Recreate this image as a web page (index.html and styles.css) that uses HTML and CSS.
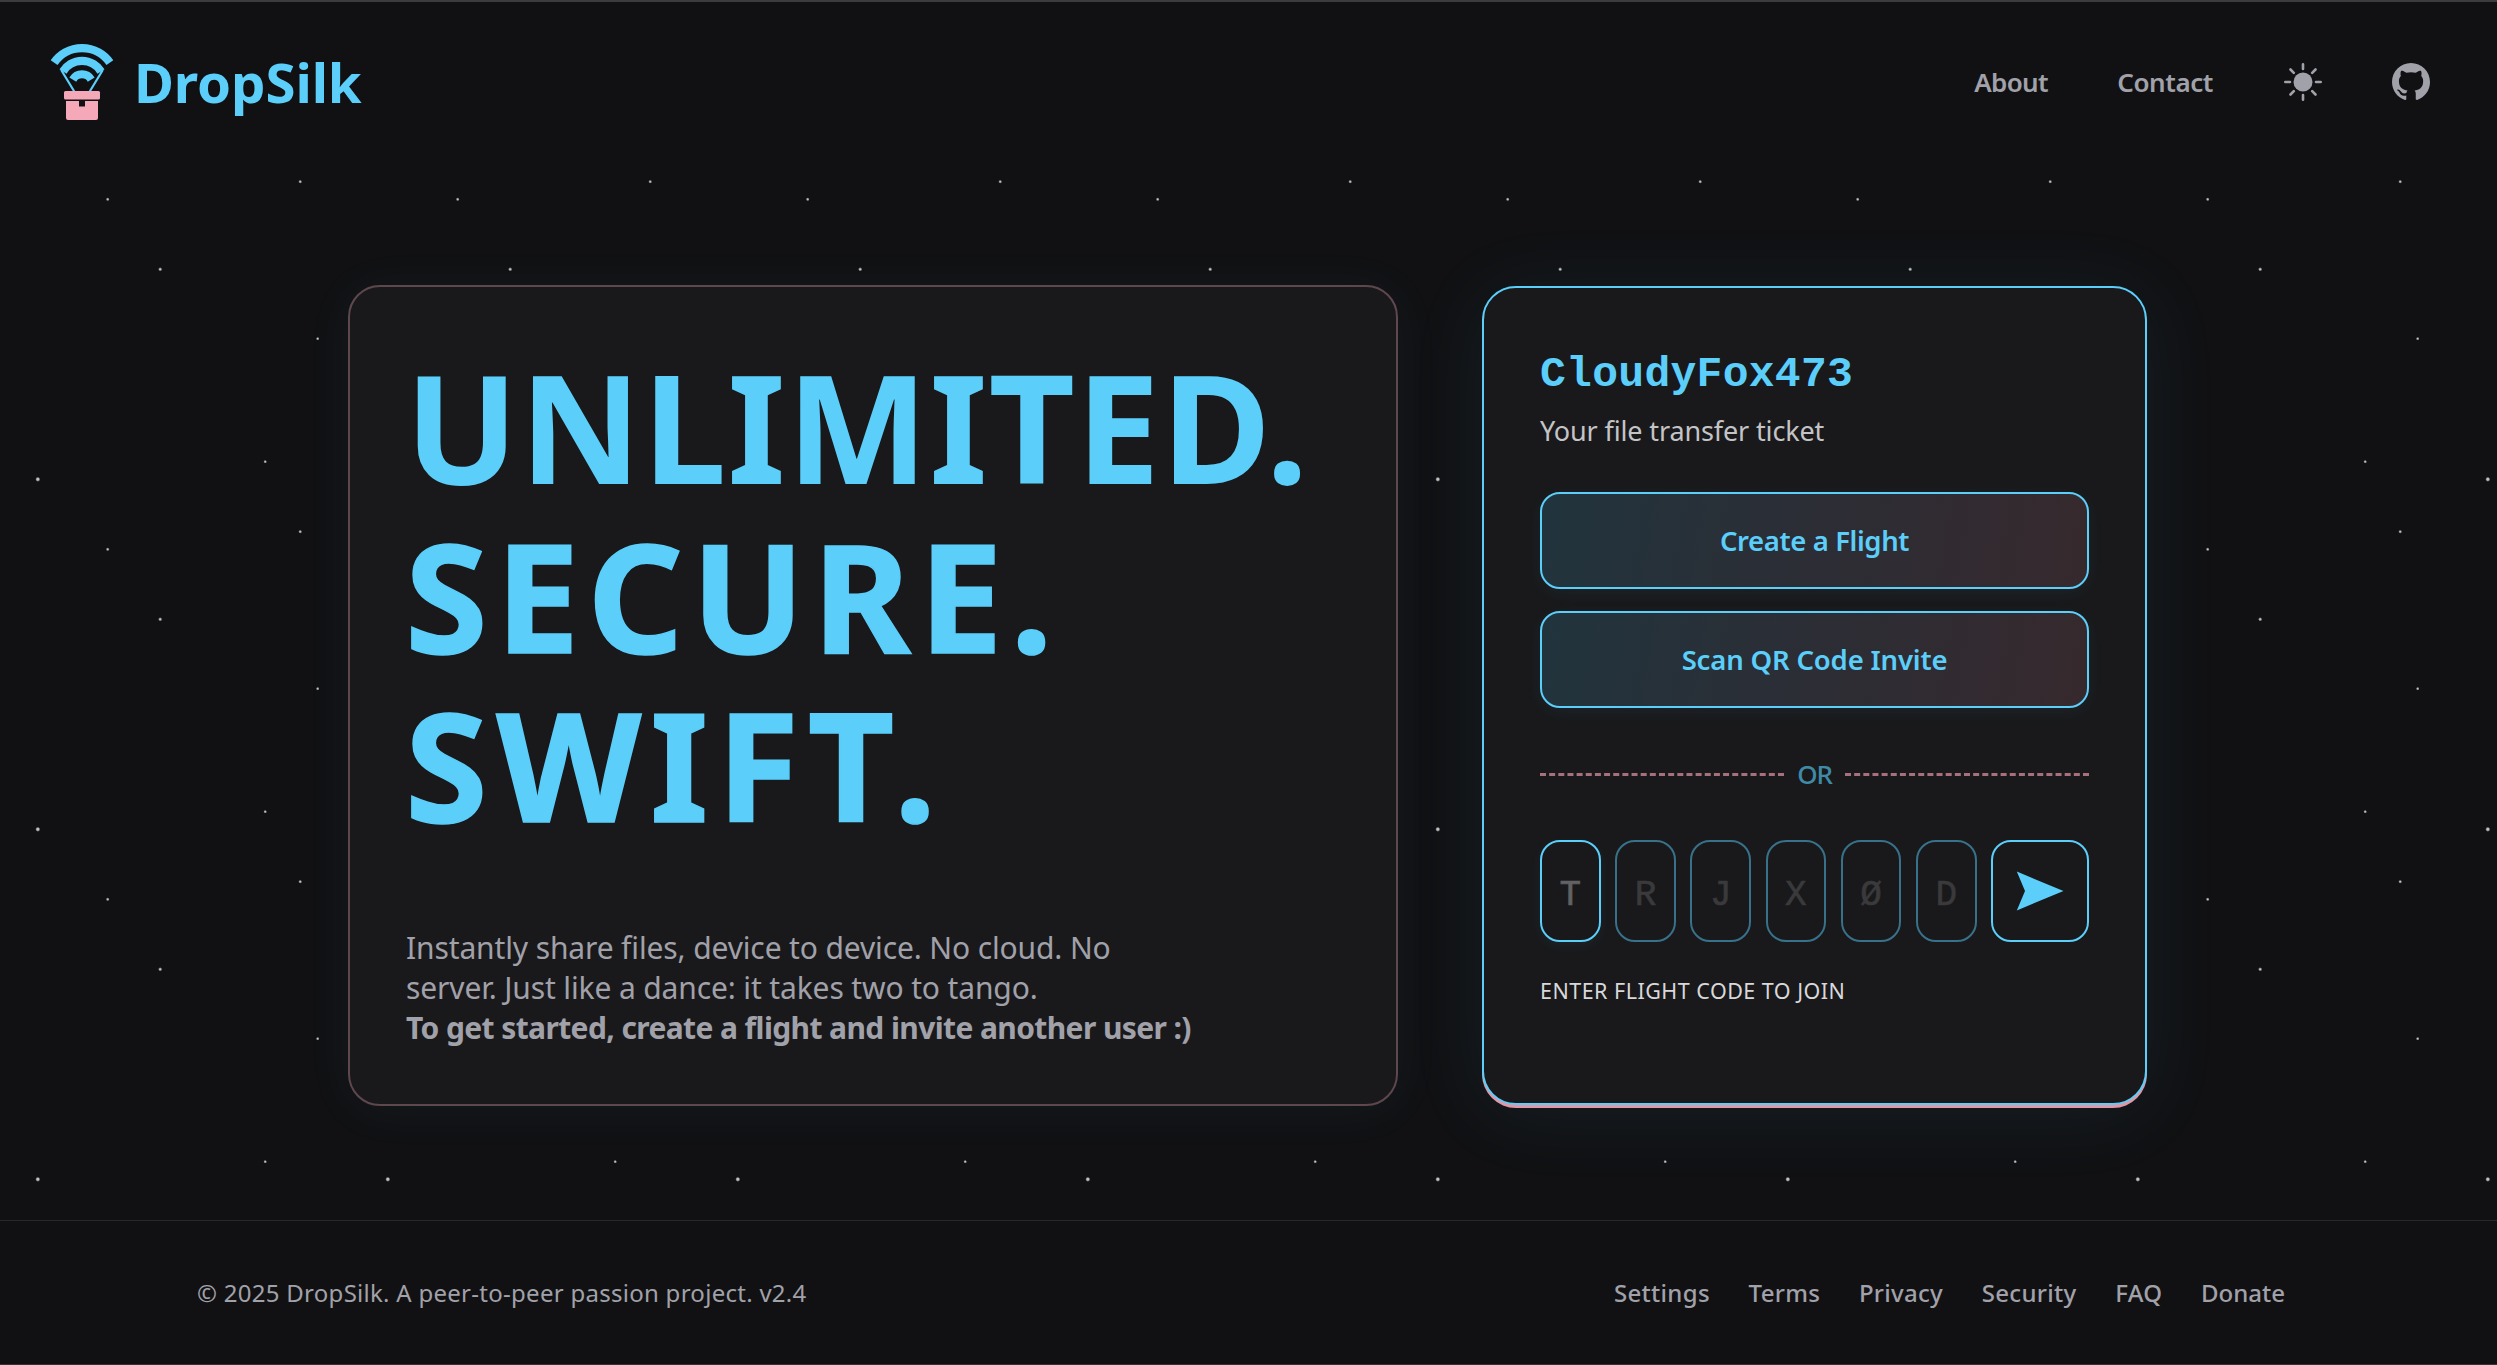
FILE: index.html
```html
<!DOCTYPE html>
<html lang="en">
<head>
<meta charset="utf-8">
<title>DropSilk</title>
<link rel="stylesheet" href="styles.css">
</head>
<body>
<header class="header">
  <a class="brand">
    <svg class="brand-logo" viewBox="50 43 64 78" width="64" height="78">
      <g fill="none" stroke="#5bcefa">
        <path d="M54.1 62.6A34 34 0 0 1 109.9 62.6" stroke-width="8.3"/>
        <path d="M63 71.500A22.400 22.400 0 0 1 101 71.500" stroke-width="8.300"/>
        <path d="M72.800 79.600A10.700 10.700 0 0 1 91.200 79.600" stroke-width="8"/>
        <path d="M61.2 70L74.600 92M102.800 70L89.400 92" stroke-width="2.200"/>
      </g>
      <g fill="#f5a9b8">
        <rect x="64" y="91" width="36" height="8.500" rx="1.500"/>
        <path d="M66 101H79V106.500H85V101H98V118a2 2 0 0 1-2 2H68a2 2 0 0 1-2-2Z"/>
      </g>
    </svg>
    <span class="brand-name">DropSilk</span>
  </a>
  <nav class="nav">
    <a class="nav-link about">About</a>
    <a class="nav-link contact">Contact</a>
    <svg viewBox="0 0 40 40" width="40" height="40">
      <circle cx="20" cy="20" r="9.5" fill="currentColor"/>
      <path d="M20 2.300V7M20 33V37.700M2.300 20H7M33 20H37.700M7.500 7.500L10.800 10.800M29.200 29.200L32.500 32.500M7.500 32.500L10.800 29.200M29.200 10.800L32.500 7.500" stroke="currentColor" stroke-width="2.6" stroke-linecap="round"/>
    </svg>
    <svg viewBox="0 0 16 16" width="38" height="38">
      <path fill="currentColor" d="M8 0C3.580 0 0 3.580 0 8c0 3.540 2.290 6.530 5.470 7.590.4.070.55-.17.55-.38 0-.19-.01-.82-.01-1.490-2.010.37-2.530-.49-2.690-.94-.09-.23-.48-.94-.82-1.130-.28-.15-.68-.52-.01-.53.630-.01 1.080.58 1.230.82.720 1.210 1.870.87 2.330.66.070-.52.280-.87.510-1.070-1.780-.2-3.640-.89-3.640-3.950 0-.87.310-1.590.82-2.150-.08-.2-.36-1.020.080-2.120 0 0 .67-.21 2.200.82.640-.18 1.320-.27 2-.27s1.360.09 2 .27c1.530-1.040 2.200-.82 2.200-.82.440 1.100.160 1.920.080 2.120.51.560.82 1.270.82 2.150 0 3.070-1.870 3.750-3.650 3.950.29.250.54.730.54 1.480 0 1.070-.01 1.930-.01 2.200 0 .21.150.46.550.38A8.010 8.010 0 0 0 16 8c0-4.420-3.580-8-8-8z"/>
    </svg>
  </nav>
</header>

<main class="main">
  <section class="card hero">
    <h1 class="hero-title"><span class="word-unlimited">UNLIMITED.</span><br><span class="word-secure">SECURE.</span><br><span class="word-swift">SWIFT.</span></h1>
    <p class="hero-text">Instantly share files, device to device. No cloud. No<br>server. Just like a dance: it takes two to tango.<br><strong>To get started, create a flight and invite another user :)</strong></p>
  </section>

  <section class="card ticket">
    <h2 class="ticket-name">CloudyFox473</h2>
    <p class="ticket-sub">Your file transfer ticket</p>
    <div class="actions">
      <button class="btn btn-create">Create a Flight</button>
      <button class="btn btn-scan">Scan QR Code Invite</button>
    </div>
    <div class="divider"><span class="or">OR</span></div>
    <div class="code">
      <span class="cell active">T</span><span class="cell">R</span><span class="cell">J</span><span class="cell">X</span><span class="cell">Ø</span><span class="cell">D</span>
      <button class="send"><svg viewBox="0 0 48 40" width="48" height="40"><path d="M.8 .6L47.500 20L.8 39.400L9 20Z" fill="currentColor"/></svg></button>
    </div>
    <p class="hint">ENTER FLIGHT CODE TO JOIN</p>
  </section>
</main>

<footer class="footer">
  <span class="copy">© 2025 DropSilk. A peer-to-peer passion project. v2.4</span>
  <nav class="footer-links">
    <a>Settings</a><a>Terms</a><a>Privacy</a><a>Security</a><a>FAQ</a><a>Donate</a>
  </nav>
</footer>
</body>
</html>
```
FILE: styles.css
```css
:root {
  --blue: #5bcefa;
  --pink: #f5a9b8;
  --bg: #111113;
  --card: #19191b;
  --muted: #a1a1aa;
  --star: rgba(255, 255, 255, .75);
}
* { box-sizing: border-box; }
body {
  margin: 0;
  height: 1365px;
  overflow: hidden;
  display: flex;
  flex-direction: column;
  border-top: 2px solid #3c3c3e;
  border-bottom: 1px solid #353537;
  background: var(--bg);
  color: #e4e4e7;
  font-family: "Noto Sans", sans-serif;
}
h1, h2, p { margin: 0; }
button { font: inherit; cursor: pointer; }
svg { display: block; }

.header {
  flex: none;
  height: 160px;
  padding: 0 67px 0 50px;
  display: flex;
  align-items: center;
  justify-content: space-between;
}
.brand { display: flex; align-items: center; gap: 20px; }
.brand-name { font-size: 54.6px; font-weight: 700; letter-spacing: -.1px; color: var(--blue); white-space: nowrap; }
.nav { display: flex; align-items: center; gap: 69.5px; color: var(--muted); }
.nav-link { font-size: 26px; font-weight: 600; letter-spacing: -.41px; }
.about { letter-spacing: -.7px; }

.main {
  flex: 1;
  padding: 123px 0 0 348px;
  display: grid;
  grid-template-columns: 1050px 665px;
  column-gap: 84px;
  align-items: start;
  background-image:
    radial-gradient(circle at 37.8px 129.3px, var(--star) 1px, transparent 2.5px),
    radial-gradient(circle at 265.2px 111.7px, var(--star) .5px, transparent 1.8px),
    radial-gradient(circle at 107.7px 199.3px, var(--star) .5px, transparent 1.9px),
    radial-gradient(circle at 300.2px 181.7px, var(--star) .5px, transparent 1.9px),
    radial-gradient(circle at 160.2px 269.3px, var(--star) .6px, transparent 2.1px),
    radial-gradient(circle at 317.7px 338.7px, var(--star) .5px, transparent 1.8px);
  background-size: 350px 350px;
  background-position: 0 -162px;
}
.card { background: var(--card); border: 2px solid; }
.hero {
  height: 821px;
  padding: 55px 57px;
  border-color: #5f474e;
  border-radius: 32px;
  box-shadow: 0 4px 50px rgba(91, 206, 250, .05);
}
.hero-title { margin-left: -2px; font-size: 150px; line-height: 169px; font-weight: 700; color: var(--blue); white-space: nowrap; }
.word-unlimited { letter-spacing: 1.03px; }
.word-secure, .word-swift { -webkit-text-stroke: 1.5px var(--blue); }
.word-secure { letter-spacing: 7.8px; }
.word-swift { letter-spacing: 8.6px; }
.hero-text { margin: 79px 0 0 -1px; font-size: 30px; line-height: 40px; letter-spacing: -.13px; color: var(--muted); white-space: nowrap; }
.hero-text strong { letter-spacing: -.61px; }
.ticket {
  height: 819px;
  margin-top: 1px;
  padding: 62px 56px;
  border-color: var(--blue);
  border-radius: 34px;
  box-shadow: 0 3px 0 #e297a6, 0 8px 80px rgba(91, 206, 250, .08);
}
.ticket-name { font: 700 43px/50px "Liberation Mono", monospace; letter-spacing: .29px; color: var(--blue); }
.ticket-sub { margin-top: 13px; font-size: 27px; line-height: 36px; letter-spacing: -.13px; color: #c4c4c7; }
.actions { margin-top: 43px; display: grid; gap: 22px; }
.btn {
  height: 97px;
  border: 2px solid var(--blue);
  border-radius: 20px;
  background: linear-gradient(100deg, #21343d, #2c2d35 50%, #36292d);
  box-shadow: 0 4px 16px rgba(91, 206, 250, .06);
  color: var(--blue);
  font-size: 27.5px;
  font-weight: 600;
}
.btn-create { letter-spacing: -.39px; }
.btn-scan { letter-spacing: -.17px; }
.divider {
  margin: 48px 0;
  height: 36px;
  display: flex;
  align-items: center;
  gap: 13px;
  color: #3f8aa7;
  font-size: 26px;
  font-weight: 500;
}
.or { letter-spacing: -1.2px; }
.divider::before, .divider::after { content: ""; flex: 1; border-top: 3px dashed #a6707c; }
.code { height: 102px; display: flex; gap: 14.4px; }
.cell {
  flex: 1;
  display: flex;
  align-items: center;
  justify-content: center;
  padding-top: 9px;
  border: 2px solid #37718a;
  border-radius: 20px;
  color: #3a3a3c;
  font: 400 36px "Liberation Mono", monospace;
  -webkit-text-stroke: .6px;
}
.cell.active { border-color: var(--blue); color: #626264; box-shadow: 0 4px 12px rgba(91, 206, 250, .06); }
.send {
  width: 98px;
  display: flex;
  align-items: center;
  justify-content: center;
  border: 2px solid var(--blue);
  border-radius: 20px;
  background: none;
  color: var(--blue);
}
.hint { margin-top: 34px; font-size: 21.5px; line-height: 30px; letter-spacing: .48px; color: #d8d8dc; white-space: nowrap; }

.footer {
  flex: none;
  height: 144px;
  padding: 0 212px 0 197px;
  border-top: 1px solid #28282a;
  display: flex;
  align-items: center;
  justify-content: space-between;
  color: var(--muted);
  font-size: 24px;
}
.copy { letter-spacing: .276px; }
.footer-links { display: flex; gap: 38.7px; font-weight: 500; letter-spacing: .3px; }
.footer-links a:last-child { letter-spacing: 0; }
```
